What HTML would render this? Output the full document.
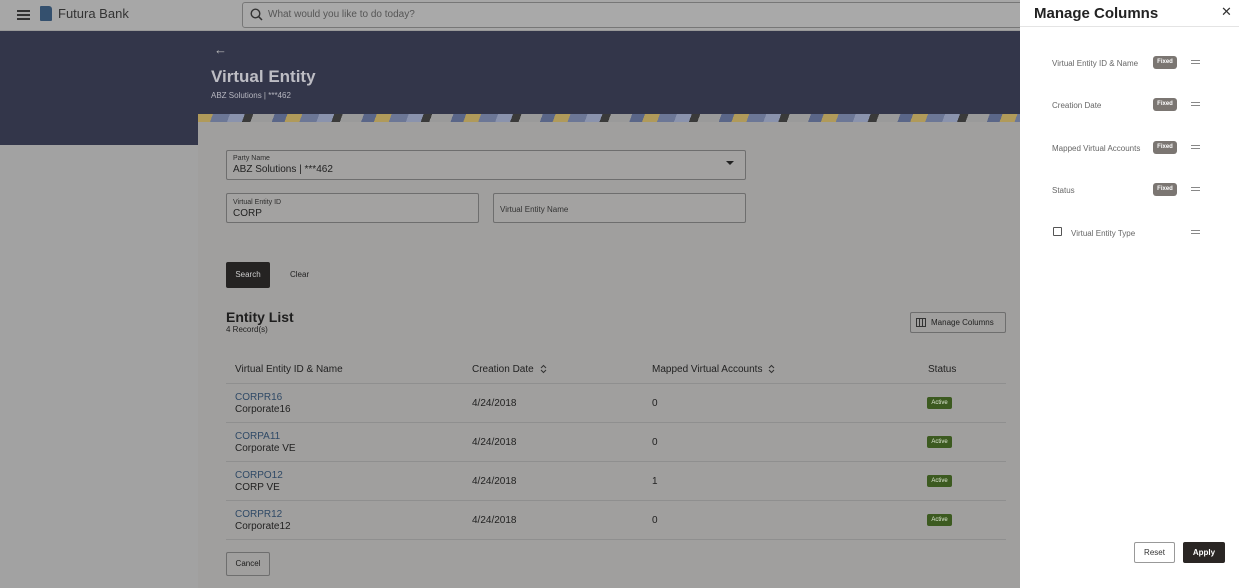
<!DOCTYPE html>
<html style="overflow:hidden"><head><style>
*{box-sizing:border-box;margin:0;padding:0}
html,body{width:1239px;height:588px;overflow:hidden}
body{background:#a2a2a2;font-family:"Liberation Sans",sans-serif;position:relative;color:#1a1a1a}
.abs{position:absolute}
.top{left:0;top:0;width:1239px;height:31px;background:#a7a7a7;border-bottom:1px solid #999}
.band{left:0;top:31px;width:1239px;height:114px;background:#33364a}
.strip{left:198px;top:114px;width:830px;height:9px;background:repeating-linear-gradient(110deg,#b09a5a 0 14px,#6c7796 14px 30px,#8a93ad 30px 44px,#3a3a3a 44px 52px,#9a9a9a 52px 72px,#5a6688 72px 84px)}
.card{left:198px;top:122px;width:830px;height:466px;background:#a09f9e}
.field{border:1px solid #6e6e6e;border-radius:2px;background:#a3a2a1}
.lbl{font-size:7px;color:#2e2e2e}
.val{font-size:10px;color:#222}
.th{font-size:10px;color:#222;top:364px}
.row{left:226px;width:780px;height:1px;background:#8f8f8f}
.link{font-size:10px;color:#2f4966}
.t{font-size:10px;color:#222}
.act{width:25px;height:12px;background:#3c5a20;border-radius:2px;color:#dfe8d4;font-size:6px;text-align:center;line-height:12px;left:927px}
.panel{left:1020px;top:0;width:219px;height:588px;background:#fff}
.pl{font-size:8px;color:#666;left:1052px}
.fx{left:1153px;width:24px;height:13px;background:#7b7672;border-radius:3px;color:#fff;font-size:6px;font-weight:bold;text-align:center;line-height:13px}
.dr{left:1191px;width:9px;height:4px;border-top:1px solid #888;border-bottom:1px solid #888}
.sort{display:inline-block;vertical-align:middle;margin-left:6px}
</style></head><body>
<div class="abs top"></div>
<div class="abs" style="left:17px;top:10px;width:13px;height:10px;border-top:2px solid #333;border-bottom:2px solid #333"></div>
<div class="abs" style="left:17px;top:14px;width:13px;height:2px;background:#333"></div>
<div class="abs" style="left:40px;top:6px;width:12px;height:15px;background:#34506e;border-radius:1px 3px 1px 1px"></div>
<div class="abs" style="left:58px;top:6px;font-size:13px;color:#333">Futura Bank</div>
<div class="abs" style="left:242px;top:2px;width:800px;height:26px;border:1px solid #777;border-radius:3px;background:#a9a9a9"></div>
<svg class="abs" style="left:250px;top:8px" width="13" height="13"><circle cx="5.5" cy="5.5" r="4.3" fill="none" stroke="#333" stroke-width="1.4"/><path d="M8.7 8.7L12 12" stroke="#333" stroke-width="1.5"/></svg>
<div class="abs" style="left:268px;top:9px;font-size:10px;color:#555">What would you like to do today?</div>
<div class="abs band"></div>
<div class="abs" style="left:214px;top:42px;font-size:13px;color:#bbb">←</div>
<div class="abs" style="left:211px;top:67px;font-size:17px;font-weight:bold;color:#bdbdc4">Virtual Entity</div>
<div class="abs" style="left:211px;top:91px;font-size:8px;color:#b7b7c0">ABZ Solutions | ***462</div>
<div class="abs strip"></div>
<div class="abs card"></div>
<div class="abs field" style="left:226px;top:150px;width:520px;height:30px"></div>
<div class="abs lbl" style="left:233px;top:155px">Party Name</div>
<div class="abs val" style="left:233px;top:164px">ABZ Solutions | ***462</div>
<div class="abs" style="left:726px;top:161px;border-left:4px solid transparent;border-right:4px solid transparent;border-top:4px solid #222"></div>
<div class="abs field" style="left:226px;top:193px;width:253px;height:30px"></div>
<div class="abs lbl" style="left:233px;top:199px">Virtual Entity ID</div>
<div class="abs val" style="left:233px;top:208px">CORP</div>
<div class="abs field" style="left:493px;top:193px;width:253px;height:30px"></div>
<div class="abs" style="left:500px;top:205px;font-size:8px;color:#333">Virtual Entity Name</div>
<div class="abs" style="left:226px;top:262px;width:44px;height:26px;background:#252322;border-radius:2px;color:#ccc;font-size:8px;text-align:center;line-height:26px">Search</div>
<div class="abs" style="left:290px;top:270px;font-size:8px;color:#222">Clear</div>
<div class="abs" style="left:226px;top:309px;font-size:14px;font-weight:bold;color:#1e1e1e">Entity List</div>
<div class="abs" style="left:226px;top:325px;font-size:8px;color:#222">4 Record(s)</div>
<div class="abs" style="left:910px;top:312px;width:96px;height:21px;border:1px solid #6e6e6e;border-radius:2px"></div>
<div class="abs" style="left:916px;top:318px;width:10px;height:9px;border:1px solid #333;background:linear-gradient(90deg,transparent 2px,#333 2px 3px,transparent 3px 5px,#333 5px 6px,transparent 6px)"></div>
<div class="abs" style="left:931px;top:318px;font-size:8px;color:#222">Manage Columns</div>
<div class="abs th" style="left:235px">Virtual Entity ID &amp; Name</div>
<div class="abs th" style="left:472px">Creation Date<svg class="sort" width="7" height="10"><path d="M1 4L3.5 1.5L6 4M1 6L3.5 8.5L6 6" fill="none" stroke="#333" stroke-width="1"/></svg></div>
<div class="abs th" style="left:652px">Mapped Virtual Accounts<svg class="sort" width="7" height="10"><path d="M1 4L3.5 1.5L6 4M1 6L3.5 8.5L6 6" fill="none" stroke="#333" stroke-width="1"/></svg></div>
<div class="abs th" style="left:928px">Status</div>
<div class="abs row" style="top:383px"></div>
<div class="abs row" style="top:422px"></div>
<div class="abs row" style="top:461px"></div>
<div class="abs row" style="top:500px"></div>
<div class="abs row" style="top:539px"></div>
<div class="abs link" style="left:235px;top:392px">CORPR16</div><div class="abs t" style="left:235px;top:404px">Corporate16</div>
<div class="abs t" style="left:472px;top:398px">4/24/2018</div><div class="abs t" style="left:652px;top:398px">0</div><div class="abs act" style="top:397px">Active</div>
<div class="abs link" style="left:235px;top:431px">CORPA11</div><div class="abs t" style="left:235px;top:443px">Corporate VE</div>
<div class="abs t" style="left:472px;top:437px">4/24/2018</div><div class="abs t" style="left:652px;top:437px">0</div><div class="abs act" style="top:436px">Active</div>
<div class="abs link" style="left:235px;top:470px">CORPO12</div><div class="abs t" style="left:235px;top:482px">CORP VE</div>
<div class="abs t" style="left:472px;top:476px">4/24/2018</div><div class="abs t" style="left:652px;top:476px">1</div><div class="abs act" style="top:475px">Active</div>
<div class="abs link" style="left:235px;top:509px">CORPR12</div><div class="abs t" style="left:235px;top:521px">Corporate12</div>
<div class="abs t" style="left:472px;top:515px">4/24/2018</div><div class="abs t" style="left:652px;top:515px">0</div><div class="abs act" style="top:514px">Active</div>
<div class="abs" style="left:226px;top:552px;width:44px;height:24px;border:1px solid #6e6e6e;border-radius:2px;font-size:8px;text-align:center;line-height:22px">Cancel</div>
<div class="abs panel"></div>
<div class="abs" style="left:1020px;top:26px;width:219px;height:1px;background:#e4e4e4"></div>
<div class="abs" style="left:1034px;top:5px;font-size:15px;font-weight:bold;color:#222">Manage Columns</div>
<div class="abs" style="left:1221px;top:4px;font-size:13px;color:#333">✕</div>
<div class="abs pl" style="top:59px">Virtual Entity ID &amp; Name</div><div class="abs fx" style="top:56px">Fixed</div><div class="abs dr" style="top:60px"></div>
<div class="abs pl" style="top:101px">Creation Date</div><div class="abs fx" style="top:98px">Fixed</div><div class="abs dr" style="top:102px"></div>
<div class="abs pl" style="top:144px">Mapped Virtual Accounts</div><div class="abs fx" style="top:141px">Fixed</div><div class="abs dr" style="top:145px"></div>
<div class="abs pl" style="top:186px">Status</div><div class="abs fx" style="top:183px">Fixed</div><div class="abs dr" style="top:187px"></div>
<div class="abs" style="left:1053px;top:227px;width:9px;height:9px;border:1px solid #555;border-radius:1px"></div>
<div class="abs pl" style="left:1071px;top:229px">Virtual Entity Type</div><div class="abs dr" style="top:230px"></div>
<div class="abs" style="left:1134px;top:542px;width:41px;height:21px;border:1px solid #999;border-radius:2px;font-size:8px;text-align:center;line-height:19px;color:#333">Reset</div>
<div class="abs" style="left:1183px;top:542px;width:42px;height:21px;background:#2a2624;border-radius:2px;font-size:8px;font-weight:bold;text-align:center;line-height:21px;color:#fff">Apply</div>
</body></html>
